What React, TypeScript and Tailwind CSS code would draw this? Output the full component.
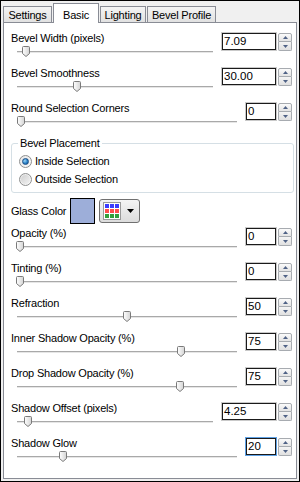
import React from "react";

type Row = {
  label: string;
  value: string;
  wide?: boolean;
  thumb: number; // thumb centre, page x
  focused?: boolean;
};

const topRows: Row[] = [
  { label: "Bevel Width (pixels)", value: "7.09", wide: true, thumb: 26 },
  { label: "Bevel Smoothness", value: "30.00", wide: true, thumb: 77 },
  { label: "Round Selection Corners", value: "0", thumb: 21 },
];

const bottomRows: Row[] = [
  { label: "Opacity (%)", value: "0", thumb: 20 },
  { label: "Tinting (%)", value: "0", thumb: 20 },
  { label: "Refraction", value: "50", thumb: 127 },
  { label: "Inner Shadow Opacity (%)", value: "75", thumb: 181 },
  { label: "Drop Shadow Opacity (%)", value: "75", thumb: 180 },
  { label: "Shadow Offset (pixels)", value: "4.25", wide: true, thumb: 28 },
  { label: "Shadow Glow", value: "20", thumb: 63, focused: true },
];

function Thumb({ left }: { left: number }) {
  return (
    <svg width="8" height="11" viewBox="0 0 8 11" className="absolute top-0" style={{ left }}>
      <defs>
        <linearGradient id="thumbFill" x1="0" y1="0" x2="1" y2="0">
          <stop offset="0" stopColor="#ffffff" />
          <stop offset="1" stopColor="#d4d4d4" />
        </linearGradient>
      </defs>
      <path
        d="M1.5 0.5 H6.5 Q7.5 0.5 7.5 1.5 V7.5 L4 10.5 L0.5 7.5 V1.5 Q0.5 0.5 1.5 0.5 Z"
        fill="url(#thumbFill)"
        stroke="#7a7a7a"
      />
    </svg>
  );
}

function Spinner() {
  return (
    <div className="mt-[1px] flex w-[14px] flex-col">
      <div className="flex h-[9px] items-center justify-center rounded-t-[2px] border border-[#a7abb0] bg-gradient-to-b from-[#fbfbfb] to-[#e4e4e4]">
        <svg width="5" height="3" viewBox="0 0 5 3">
          <path d="M0 3 L2.5 0 L5 3 Z" fill="#4f6286" />
        </svg>
      </div>
      <div className="flex h-[9px] items-center justify-center rounded-b-[2px] border border-t-0 border-[#a7abb0] bg-gradient-to-b from-[#f4f4f4] to-[#e0e0e0]">
        <svg width="5" height="3" viewBox="0 0 5 3">
          <path d="M0 0 L5 0 L2.5 3 Z" fill="#4f6286" />
        </svg>
      </div>
    </div>
  );
}

function SliderRow({ row }: { row: Row }) {
  return (
    <div className="flex h-[35px] pr-[4px]">
      <div className="flex flex-1 flex-col pl-[7px] pr-[8px]">
        <div className="h-[13px] text-[11px] leading-[13px] tracking-[-0.2px] whitespace-nowrap">{row.label}</div>
        <div className="relative ml-[6px] mt-[1px] h-[11px]">
          <div className="absolute left-0 right-0 top-[5px] h-[2px] border-t border-[#a9a9a9] bg-[#e6e6e6]" />
          <Thumb left={row.thumb - 4 - 17} />
        </div>
      </div>
      <div className="flex items-start gap-[1px]">
        <div
          className={
            "h-[19px] border " +
            (row.focused ? "border-[#5fa2e6] " : "border-[#c9c9c9] ") +
            (row.wide ? "w-[56px]" : "w-[32px]")
          }
        >
          <div className="h-full border border-[#1a1a1a] pl-[1px] text-[11.5px] leading-[15px]">{row.value}</div>
        </div>
        <Spinner />
      </div>
    </div>
  );
}

function Radio({ checked }: { checked?: boolean }) {
  return (
    <div className="flex h-[13px] w-[13px] items-center justify-center rounded-full border border-[#8e8f8f] bg-gradient-to-br from-[#e8e8e8] to-[#f8f8f8]">
      {checked ? (
        <div className="h-[7px] w-[7px] rounded-full border border-[#1c4f86] bg-[radial-gradient(circle_at_35%_35%,#9fd6f6,#2a82c8_55%,#0b4d8c)]" />
      ) : (
        <div className="h-[9px] w-[9px] rounded-full bg-gradient-to-br from-[#d0d0d0] to-[#f2f2f2]" />
      )}
    </div>
  );
}

export default function App() {
  const tabs = ["Settings", "Basic", "Lighting", "Bevel Profile"];
  const widths = ["w-[49px]", "w-[46px]", "w-[46px]", "w-[69px]"];
  return (
    <div className="h-[482px] w-[300px] border border-black bg-[#f0f0f0] font-['Liberation_Sans',Arial,sans-serif] text-black">
      <div className="flex h-[21px] items-end gap-[1px] pl-[2px]">
        {tabs.map((t, i) =>
          i === 1 ? (
            <div
              key={t}
              className={"relative z-10 -mb-[1px] flex h-[20px] items-start justify-center border border-b-0 border-[#898c95] bg-white pt-[3px] text-[11px] tracking-[-0.2px] " + widths[i]}
            >
              {t}
            </div>
          ) : (
            <div
              key={t}
              className={"flex h-[16px] items-center justify-center border border-b-0 border-[#898c95] bg-gradient-to-b from-[#f4f4f4] to-[#e1e1e1] pt-[1px] text-[11px] tracking-[-0.2px] " + widths[i]}
            >
              {t}
            </div>
          )
        )}
      </div>

      <div className="ml-[2px] flex h-[457px] w-[294px] flex-col border border-[#898c95] bg-white pt-[9px]">
        {topRows.map((r) => (
          <SliderRow key={r.label} row={r} />
        ))}

        <fieldset className="ml-[7px] mr-[2px] rounded-[3px] border border-[#d5dfe5] px-[6px] pb-[6px] pt-[4px]">
          <legend className="px-[2px] text-[11px] leading-[13px] tracking-[-0.2px]">Bevel Placement</legend>
          <div className="flex flex-col gap-[4px]">
            <div className="flex h-[14px] items-center gap-[3px] pl-[1px] text-[11px] tracking-[-0.2px]">
              <Radio checked />
              <span>Inside Selection</span>
            </div>
            <div className="flex h-[14px] items-center gap-[3px] pl-[1px] text-[11px] tracking-[-0.2px]">
              <Radio />
              <span>Outside Selection</span>
            </div>
          </div>
        </fieldset>

        <div className="mt-[5px] flex h-[26px] items-center pl-[7px]">
          <div className="w-[59px] text-[11px] leading-[13px] tracking-[-0.2px]">Glass Color</div>
          <div className="h-[26px] w-[25px] border border-black bg-[#9daed9]" />
          <div className="ml-[4px] flex h-[24px] w-[41px] items-center rounded-[3px] border border-[#707070] bg-gradient-to-b from-[#f4f4f4] to-[#dcdcdc] pl-[3px]">
            <div className="grid grid-cols-3 gap-[1px] border border-[#9a9a9a] bg-white p-[1px]">
              {["#3c3cff", "#3c3cff", "#3c3cff", "#ff4d4d", "#ff4d4d", "#ff4d4d", "#32a03c", "#32a03c", "#32a03c"].map((c, i) => (
                <div key={i} className="h-[4px] w-[4px]" style={{ backgroundColor: c }} />
              ))}
            </div>
            <svg width="7" height="4" viewBox="0 0 7 4" className="ml-[6px]">
              <path d="M0 0 L7 0 L3.5 4 Z" fill="#000" />
            </svg>
          </div>
        </div>

        <div className="mt-[3px] flex flex-col">
          {bottomRows.map((r) => (
            <SliderRow key={r.label} row={r} />
          ))}
        </div>
      </div>
    </div>
  );
}
